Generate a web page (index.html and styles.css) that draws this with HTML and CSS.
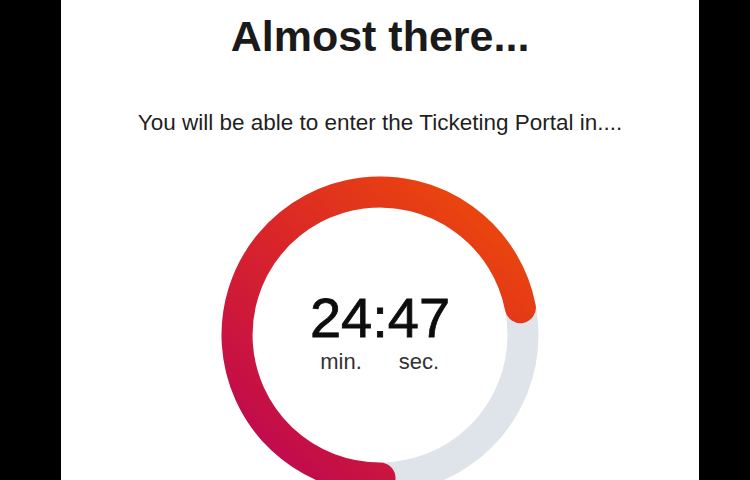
FILE: index.html
```html
<!DOCTYPE html>
<html lang="en">
<head>
  <meta charset="UTF-8" />
  <meta name="viewport" content="width=device-width, initial-scale=1.0"/>
  <title>Waiting Room</title>
  <link rel="stylesheet" href="styles.css">
</head>
<body>
  <div class="panel">
    <h1>Almost there...</h1>
    <p class="lead">You will be able to enter the Ticketing Portal in....</p>

    <div class="ring">
      <svg width="320" height="320" viewBox="0 0 320 320">
        <defs>
          <linearGradient id="ringGrad" gradientUnits="userSpaceOnUse" x1="90" y1="300" x2="300" y2="60">
            <stop offset="0" stop-color="#c20c4b"/>
            <stop offset="0.5" stop-color="#da2628"/>
            <stop offset="1" stop-color="#eb470c"/>
          </linearGradient>
        </defs>
        <circle cx="160" cy="160" r="143" fill="none" stroke="#dfe4ea" stroke-width="31"/>
        <path d="M160 303 A143 143 0 1 1 300.4 132.7" fill="none" stroke="url(#ringGrad)" stroke-width="31" stroke-linecap="round"/>
      </svg>

      <div class="timer">
        <div class="unit">
          <span class="num">24</span>
          <span class="label">min.</span>
        </div>
        <span class="num colon">:</span>
        <div class="unit">
          <span class="num">47</span>
          <span class="label">sec.</span>
        </div>
      </div>
    </div>
  </div>
</body>
</html>
```

FILE: styles.css
```css
body {
  margin: 0;
  background: #000;
  font-family: 'Liberation Sans', Arial, sans-serif;
  color: #1a1a1a;
  overflow: hidden;
}
.panel {
  width: 638px;
  height: 480px;
  margin-left: 61px;
  background: #fff;
  text-align: center;
  padding-top: 11px;
  box-sizing: border-box;
}
h1 {
  margin: 0;
  font-size: 43px;
  line-height: 50px;
  font-weight: 700;
}
.lead {
  margin: 49px 0 0;
  font-size: 22.5px;
  line-height: 26px;
  color: #1f1f1f;
}
.ring {
  display: grid;
  width: 320px;
  height: 320px;
  margin: 39px auto 0;
}
.ring svg,
.ring .timer {
  grid-area: 1 / 1;
}
.timer {
  display: flex;
  justify-content: center;
  align-items: flex-start;
  align-self: center;
  color: #0d0d0d;
}
.unit {
  display: flex;
  flex-direction: column;
  align-items: center;
}
.num {
  display: block;
  font-size: 56px;
  line-height: 44px;
  -webkit-text-stroke: 0.8px #0d0d0d;
}
.label {
  display: block;
  margin-top: 10px;
  font-size: 22px;
  line-height: 24px;
  color: #333;
}
```
